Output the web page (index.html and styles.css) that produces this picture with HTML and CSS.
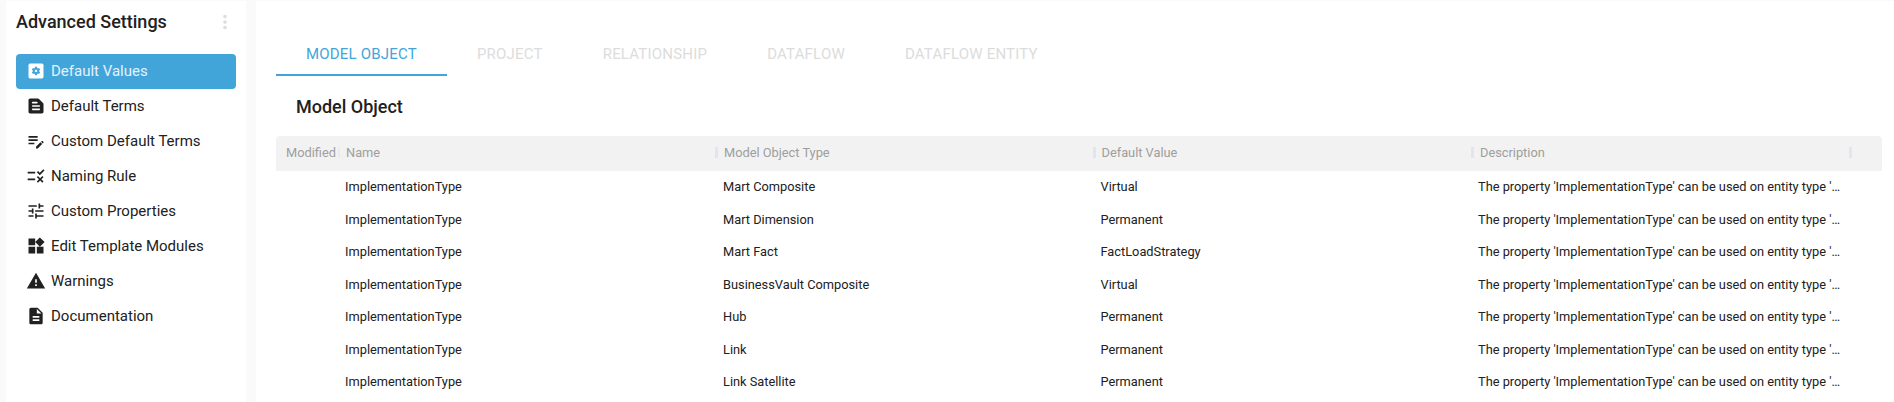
FILE: index.html
```html
<!DOCTYPE html>
<html lang="en">
<head>
<meta charset="utf-8">
<title>Advanced Settings</title>
<link rel="stylesheet" href="styles.css">
</head>
<body>
<div class="app">
  <aside class="sidebar">
    <div class="side-head">
      <h2 class="side-title">Advanced Settings</h2>
      <svg class="more" viewBox="0 0 24 24"><path d="M12 8c1.1 0 2-.9 2-2s-.9-2-2-2-2 .9-2 2 .9 2 2 2zm0 2c-1.1 0-2 .9-2 2s.9 2 2 2 2-.9 2-2-.9-2-2-2zm0 6c-1.1 0-2 .9-2 2s.9 2 2 2 2-.9 2-2-.9-2-2-2z"/></svg>
    </div>
    <nav class="nav">
      <a class="nav-item active"><svg class="icon" viewBox="0 0 24 24"><rect x="3" y="3" width="18" height="18" rx="2"/><g transform="translate(12 12) scale(.72) translate(-12 -12)"><path class="gear" fill-rule="evenodd" d="M17.25 12c0 .23-.02.46-.05.68l1.48 1.16c.13.11.17.3.08.45l-1.4 2.42c-.09.15-.27.21-.43.15l-1.74-.7c-.36.28-.76.51-1.18.69l-.26 1.85c-.03.17-.18.3-.35.3h-2.8c-.17 0-.32-.13-.35-.29l-.26-1.85c-.43-.18-.82-.41-1.18-.69l-1.74.7c-.16.06-.34 0-.43-.15l-1.4-2.42c-.09-.15-.05-.34.08-.45l1.48-1.16c-.03-.23-.05-.46-.05-.69 0-.23.02-.46.05-.68l-1.48-1.16c-.13-.11-.17-.3-.08-.45l1.4-2.42c.09-.15.27-.21.43-.15l1.74.7c.36-.28.76-.51 1.18-.69l.26-1.85c.03-.17.18-.3.35-.3h2.8c.17 0 .32.13.35.29l.26 1.85c.43.18.82.41 1.18.69l1.74-.7c.16-.06.34 0 .43.15l1.4 2.42c.09.15.05.34-.08.45l-1.48 1.16c.03.23.05.46.05.69zM12 10c-1.1 0-2 .9-2 2s.9 2 2 2 2-.9 2-2-.9-2-2-2z"/></g></svg>Default Values</a>
      <a class="nav-item"><svg class="icon" viewBox="0 0 24 24"><path fill-rule="evenodd" d="M14.17 3H5c-1.1 0-2 .9-2 2v14c0 1.1.9 2 2 2h14c1.1 0 2-.9 2-2V9.83c0-.53-.21-1.04-.59-1.41l-4.83-4.83c-.37-.38-.88-.59-1.41-.59zM8 15h8c.55 0 1 .45 1 1s-.45 1-1 1H8c-.55 0-1-.45-1-1s.45-1 1-1zm0-4h8c.55 0 1 .45 1 1s-.45 1-1 1H8c-.55 0-1-.45-1-1s.45-1 1-1zm0-4h5c.55 0 1 .45 1 1s-.45 1-1 1H8c-.55 0-1-.45-1-1s.45-1 1-1z"/></svg>Default Terms</a>
      <a class="nav-item"><svg class="icon" viewBox="0 0 24 24"><path d="M3 10h11v2H3v-2zm0-2h11V6H3v2zm0 8h7v-2H3v2zm15.01-3.13.71-.71c.39-.39 1.02-.39 1.41 0l.71.71c.39.39.39 1.02 0 1.41l-.71.71-2.12-2.12zm-.71.71L12 18.88V21h2.12l5.3-5.3-2.12-2.12z"/></svg>Custom Default Terms</a>
      <a class="nav-item"><svg class="icon" viewBox="0 0 24 24"><path d="M16.54 11 13 7.46l1.41-1.41 2.12 2.12 4.24-4.24 1.41 1.41L16.54 11zM11 7H2v2h9V7zm10 6.41L19.59 12 17 14.59 14.41 12 13 13.41 15.59 16 13 18.59 14.41 20 17 17.41 19.59 20 21 18.59 18.41 16 21 13.41zM11 15H2v2h9v-2z"/></svg>Naming Rule</a>
      <a class="nav-item"><svg class="icon" viewBox="0 0 24 24"><path d="M3 17v2h6v-2H3zM3 5v2h10V5H3zm10 16v-2h8v-2h-8v-2h-2v6h2zM7 9v2H3v2h4v2h2V9H7zm14 4v-2H11v2h10zm-6-4h2V7h4V5h-4V3h-2v6z"/></svg>Custom Properties</a>
      <a class="nav-item"><svg class="icon" viewBox="0 0 24 24"><path d="M13 13v8h8v-8h-8zM3 21h8v-8H3v8zM3 3v8h8V3H3zm13.66-1.31L11 7.34 16.66 13l5.66-5.66-5.66-5.65z"/></svg>Edit Template Modules</a>
      <a class="nav-item"><svg class="icon" viewBox="0 0 24 24"><path d="M1 21h22L12 2 1 21zm12-3h-2v-2h2v2zm0-4h-2v-4h2v4z"/></svg>Warnings</a>
      <a class="nav-item"><svg class="icon" viewBox="0 0 24 24"><path fill-rule="evenodd" d="M14 2H6c-1.1 0-1.99.9-1.99 2L4 20c0 1.1.89 2 1.99 2H18c1.1 0 2-.9 2-2V8l-6-6zm2 16H8v-2h8v2zm0-4H8v-2h8v2zm-3-5V3.5L18.5 9H13z"/></svg>Documentation</a>
    </nav>
  </aside>
  <main class="main">
    <div class="tabs">
      <div class="tab active">MODEL OBJECT</div>
      <div class="tab">PROJECT</div>
      <div class="tab">RELATIONSHIP</div>
      <div class="tab">DATAFLOW</div>
      <div class="tab">DATAFLOW ENTITY</div>
    </div>
    <h3 class="section-title">Model Object</h3>
    <div class="table">
      <div class="row head">
        <div class="hcell">Modified</div>
        <div class="hcell">Name</div>
        <div class="hcell">Model Object Type</div>
        <div class="hcell">Default Value</div>
        <div class="hcell">Description</div>
      </div>
      <div class="row"><div class="cell"></div><div class="cell">ImplementationType</div><div class="cell">Mart Composite</div><div class="cell">Virtual</div><div class="cell desc">The property 'ImplementationType' can be used on entity type 'Mart Composite' to select the implementation</div></div>
      <div class="row"><div class="cell"></div><div class="cell">ImplementationType</div><div class="cell">Mart Dimension</div><div class="cell">Permanent</div><div class="cell desc">The property 'ImplementationType' can be used on entity type 'Mart Dimension' to select the implementation</div></div>
      <div class="row"><div class="cell"></div><div class="cell">ImplementationType</div><div class="cell">Mart Fact</div><div class="cell">FactLoadStrategy</div><div class="cell desc">The property 'ImplementationType' can be used on entity type 'Mart Fact' to select the implementation</div></div>
      <div class="row"><div class="cell"></div><div class="cell">ImplementationType</div><div class="cell">BusinessVault Composite</div><div class="cell">Virtual</div><div class="cell desc">The property 'ImplementationType' can be used on entity type 'BusinessVault Composite' to select the implementation</div></div>
      <div class="row"><div class="cell"></div><div class="cell">ImplementationType</div><div class="cell">Hub</div><div class="cell">Permanent</div><div class="cell desc">The property 'ImplementationType' can be used on entity type 'Hub' to select the implementation</div></div>
      <div class="row"><div class="cell"></div><div class="cell">ImplementationType</div><div class="cell">Link</div><div class="cell">Permanent</div><div class="cell desc">The property 'ImplementationType' can be used on entity type 'Link' to select the implementation</div></div>
      <div class="row"><div class="cell"></div><div class="cell">ImplementationType</div><div class="cell">Link Satellite</div><div class="cell">Permanent</div><div class="cell desc">The property 'ImplementationType' can be used on entity type 'Link Satellite' to select the implementation</div></div>
    </div>
  </main>
</div>
</body>
</html>
```

FILE: styles.css
```css
* { box-sizing: border-box; }
html, body { margin: 0; height: 100%; overflow: hidden; }
body { background: #fafafa; font-family: Roboto, "Liberation Sans", sans-serif; color: #212121; }
.app { display: flex; gap: 10px; height: 402px; padding: 1px 0 0 6px; }
.sidebar { width: 240px; flex: none; background: #fff; padding: 0 10px; }
.side-head { display: flex; align-items: center; justify-content: space-between; height: 40px; margin-bottom: 13px; }
.side-title { margin: 0; font-size: 18px; font-weight: 500; color: #212121; }
.more { width: 22px; height: 22px; fill: #ddd; margin-top: 2px; }
.nav { display: flex; flex-direction: column; }
.nav-item { display: flex; align-items: center; gap: 5px; height: 35px; padding: 0 0 2px 10px; border-radius: 4px; font-size: 15px; color: #212121; }
.nav-item.active { background: #42a5d9; color: #e3f2fd; }
.icon { width: 20px; height: 20px; flex: none; fill: #212121; }
.nav-item.active .icon { fill: #fff; }
.nav-item.active .gear { fill: #42a5d9; }
.main { flex: 1; min-width: 0; background: #fff; padding: 36px 12px 0 20px; }
.tabs { display: flex; height: 39px; }
.tab { display: flex; align-items: center; height: 39px; padding: 0 30px 4px; font-size: 15px; letter-spacing: .2px; color: #dcdcdc; border-bottom: 2px solid transparent; }
.tab.active { color: #42a5d9; border-bottom-color: #42a5d9; }
.section-title { margin: 0; height: 60px; padding: 21px 0 0 20px; font-size: 18px; font-weight: 500; line-height: 20px; color: #212121; }
.table { display: flex; flex-direction: column; }
.row { display: grid; grid-template-columns: 66px 378px 377.5px 378.5px 378px 28px; align-items: center; height: 32.5px; font-size: 12.8px; color: #212121; }
.row.head { height: 34.5px; padding-bottom: 1px; background: #f2f2f2; border-radius: 4px 4px 0 0; color: #9e9e9e; }
.hcell { display: flex; align-items: center; justify-content: space-between; padding: 0 2px 0 4px; }
.hcell:first-child { padding-left: 10px; padding-right: 2px; }
.hcell::after { content: ""; width: 3px; height: 11px; background: #e1e6ee; }
.hcell:first-child::after { width: 2px; background: #e8ecf2; }
.cell { padding: 0 10px 0 3px; white-space: nowrap; overflow: hidden; text-overflow: ellipsis; }
.desc { padding: 0 9px 0 2px; }
```
